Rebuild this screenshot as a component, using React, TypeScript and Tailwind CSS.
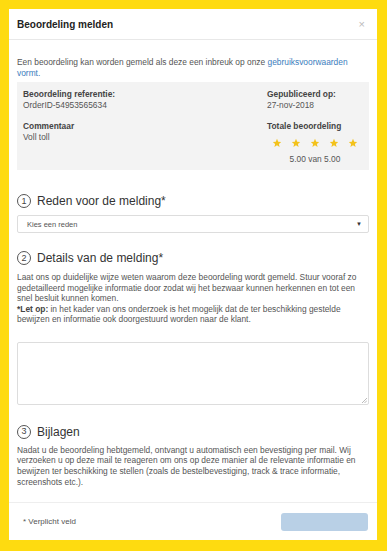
const Star = () => (
  <svg viewBox="0 0 24 24" className="h-[10px] w-[10px] fill-[#f3c21b]">
    <path d="M12 2l2.9 6.9 7.1.6-5.4 4.7 1.6 7.3L12 17.6 5.8 21.5l1.6-7.3L2 9.5l7.1-.6z" />
  </svg>
);

const StepTitle = ({ n, title }: { n: number; title: string }) => (
  <div className="flex h-[16px] items-center gap-[6px]">
    <span className="flex h-[14px] w-[14px] items-center justify-center rounded-full border border-[#555] text-[9px] leading-none text-[#444]">
      {n}
    </span>
    <h3 className="text-[12px] leading-[16px] text-[#333]">{title}</h3>
  </div>
);

const App = () => {
  return (
    <div className="min-h-screen bg-[#fedb10] p-[9px] font-['Liberation_Sans',Arial,sans-serif]">
      <div className="w-[368px] bg-white">
        <div className="flex h-[31px] items-center justify-between border-b border-[#e8e8e8] px-[8px]">
          <h2 className="text-[10px] font-bold text-[#222]">Beoordeling melden</h2>
          <span className="pr-[4px] text-[11px] leading-none text-[#bbb]">×</span>
        </div>

        <div className="px-[8px] pt-[17px] text-[8.4px] leading-[11px] text-[#555]">
          <p>
            Een beoordeling kan worden gemeld als deze een inbreuk op onze{" "}
            <span className="text-[#3b7dbd]">gebruiksvoorwaarden</span>{" "}
            <span className="text-[#3b7dbd]">vormt.</span>
          </p>

          <div className="mt-[3px] grid grid-cols-[1fr_96px] gap-y-[10px] bg-[#f3f3f3] px-[6px] pt-[7px] pb-[5px]">
            <div>
              <p className="font-bold text-[#444]">Beoordeling referentie:</p>
              <p>OrderID-54953565634</p>
            </div>
            <div>
              <p className="font-bold text-[#444]">Gepubliceerd op:</p>
              <p>27-nov-2018</p>
            </div>
            <div>
              <p className="font-bold text-[#444]">Commentaar</p>
              <p>Voll toll</p>
            </div>
            <div>
              <p className="font-bold text-[#444]">Totale beoordeling</p>
              <div className="flex flex-col items-center pt-[6px]">
                <div className="flex gap-[9px]">
                  <Star />
                  <Star />
                  <Star />
                  <Star />
                  <Star />
                </div>
                <p className="pt-[6px]">5.00 van 5.00</p>
              </div>
            </div>
          </div>

          <div className="pt-[23px]">
            <StepTitle n={1} title="Reden voor de melding*" />
            <div className="mt-[6px] flex h-[18px] items-center justify-between rounded-[2px] border border-[#ddd] pl-[9px] pr-[6px] text-[7.5px] text-[#555]">
              <span>Kies een reden</span>
              <span className="text-[6px] text-[#333]">▼</span>
            </div>
          </div>

          <div className="pt-[17px]">
            <StepTitle n={2} title="Details van de melding*" />
            <div className="pt-[6px] leading-[10.5px]">
              <p>
                Laat ons op duidelijke wijze weten waarom deze beoordeling wordt gemeld. Stuur vooraf zo
                gedetailleerd mogelijke informatie door zodat wij het bezwaar kunnen herkennen en tot een
                snel besluit kunnen komen.
              </p>
              <p>
                <b className="text-[#444]">*Let op:</b> in het kader van ons onderzoek is het mogelijk
                dat de ter beschikking gestelde bewijzen en informatie ook doorgestuurd worden naar de
                klant.
              </p>
            </div>
            <div className="relative mt-[17px] h-[63px] rounded-[2px] border border-[#ddd]">
              <svg viewBox="0 0 6 6" className="absolute right-[1px] bottom-[1px] h-[5px] w-[5px] stroke-[#999]">
                <path d="M6 0L0 6M6 3L3 6" strokeWidth="0.8" />
              </svg>
            </div>
          </div>

          <div className="pt-[19px]">
            <StepTitle n={3} title="Bijlagen" />
            <p className="pt-[5px] leading-[10.7px]">
              Nadat u de beoordeling hebtgemeld, ontvangt u automatisch een bevestiging per mail. Wij
              verzoeken u op deze mail te reageren om ons op deze manier al de relevante informatie en
              bewijzen ter beschikking te stellen (zoals de bestelbevestiging, track &amp; trace
              informatie, screenshots etc.).
            </p>
          </div>
        </div>

        <div className="mt-[15px] flex h-[38px] items-center justify-between border-t border-[#eee] pl-[14px] pr-[9px]">
          <span className="text-[8px] text-[#555]">* Verplicht veld</span>
          <div className="h-[18px] w-[87px] rounded-[3px] bg-[#b9d0e6]" />
        </div>
      </div>
    </div>
  );
};

export default App;
